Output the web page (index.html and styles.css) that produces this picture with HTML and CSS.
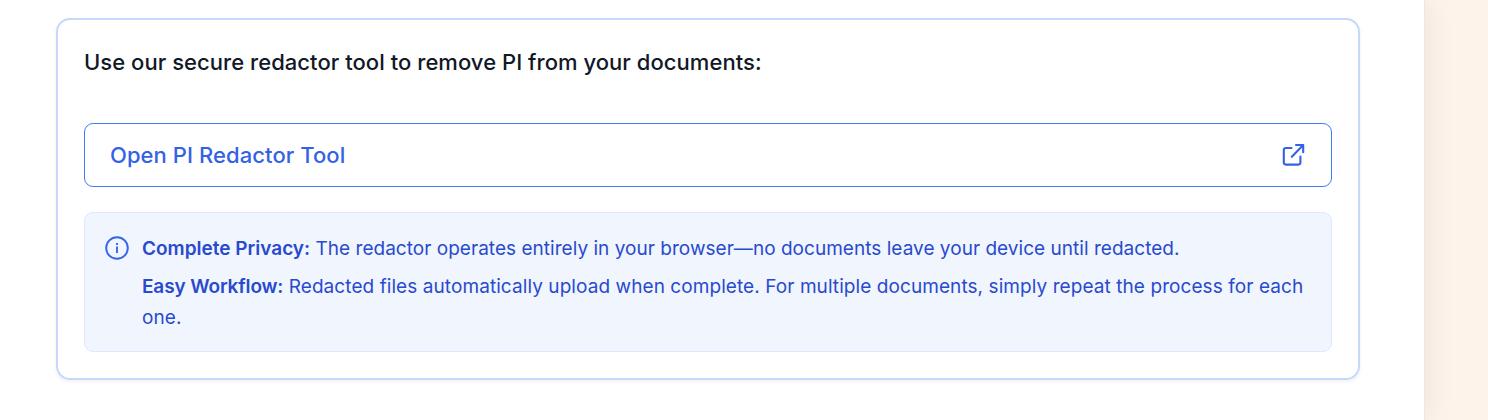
FILE: index.html
```html
<!DOCTYPE html>
<html lang="en">
<head>
<meta charset="utf-8">
<title>PI Redactor Tool</title>
<link rel="stylesheet" href="styles.css">
</head>
<body>
<main class="panel">
  <section class="card">
    <h2 class="title">Use our secure redactor tool to remove PI from your documents:</h2>
    <a class="open-button">
      <span>Open PI Redactor Tool</span>
      <svg class="external" viewBox="0 0 28 28" fill="none" stroke="currentColor" stroke-width="2.1" stroke-linecap="round" stroke-linejoin="round"><path d="M12.5 7H6.8a2 2 0 0 0-2 2v12.6a2 2 0 0 0 2 2h12.6a2 2 0 0 0 2-2v-6.1M17 4h7.2v7.2M24 4.2L12.8 15.8"/></svg>
    </a>
    <div class="notice">
      <svg class="info" viewBox="0 0 24 24" fill="none" stroke="currentColor" stroke-width="1.9"><circle cx="12" cy="12" r="10.8"/><path d="M12 17v-6.5M12 9V7"/></svg>
      <div class="notice-text">
        <p class="privacy"><strong>Complete Privacy:</strong> The redactor operates entirely in your browser—no documents leave your device until redacted.</p>
        <p class="workflow"><strong>Easy Workflow:</strong> Redacted files automatically upload when complete. For multiple documents, simply repeat the process for each one.</p>
      </div>
    </div>
  </section>
</main>
</body>
</html>
```
FILE: styles.css
```css
* { box-sizing: border-box; }
body { margin: 0; height: 420px; overflow: hidden; background: #fdf3ea; font-family: Inter, "Liberation Sans", sans-serif; }
.panel { width: 1424px; height: 420px; padding: 18px 64px 0 56px; background: #fff; box-shadow: 0 0 0 1px #e8e7e9, 0 0 32px rgba(0,0,0,.08); }
.card { height: 362px; padding: 26px; border: 2px solid #c5d9fb; border-radius: 14px; box-shadow: 0 2px 4px rgba(0,0,0,.06); }
.title { margin: 0; height: 77px; font-size: 22px; line-height: 32px; font-weight: 500; letter-spacing: .045px; color: #111827; white-space: nowrap; }
.open-button { display: flex; align-items: center; justify-content: space-between; height: 64px; padding: 0 24px 0 25px; border: 1px solid #3b7eea; border-radius: 9px; color: #3462e4; font-size: 22px; font-weight: 500; letter-spacing: .07px; }
.external { width: 28px; height: 28px; }
.notice { display: flex; gap: 13px; height: 140px; margin-top: 25px; padding: 20px 20px 0 20px; border: 1px solid #dbe8fd; border-radius: 9px; background: #f0f5fe; color: #294acd; }
.info { width: 24px; height: 24px; margin-top: 3px; flex: none; color: #3864e8; }
.notice-text { font-size: 19px; line-height: 31px; }
.notice p { margin: 0; }
.notice .privacy { letter-spacing: .03px; }
.notice .workflow { margin-top: 7px; letter-spacing: .075px; }
strong { font-weight: 600; letter-spacing: 0; }
.workflow strong { letter-spacing: -.13px; }
```
